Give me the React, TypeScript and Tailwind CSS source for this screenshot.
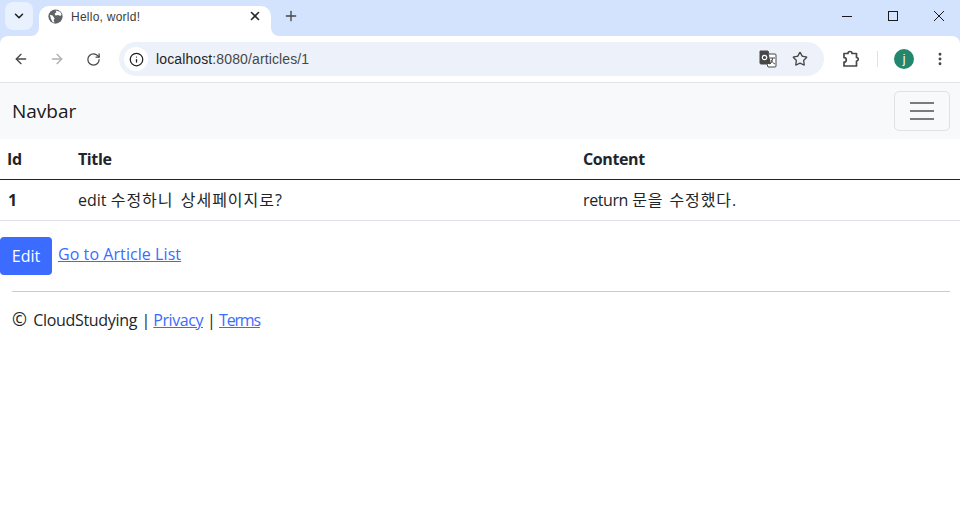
import React from 'react';
import { ArrowLeft, ArrowRight, RotateCw, Star, Plus, X, ChevronDown, EllipsisVertical, Info } from 'lucide-react';

const FONT = "font-['Open_Sans','Noto_Sans_CJK_KR',sans-serif]";

/* ── Browser chrome ── */
const TabStrip = () => (
  <div className="h-9 bg-[#d3e3fd] flex items-start pl-[4px] font-['Liberation_Sans',sans-serif]">
    <div className="w-[28px] h-[28px] mt-[2px] ml-[1px] rounded-lg bg-[#e9f0fe] flex items-center justify-center text-[#1f1f1f]">
      <ChevronDown size={14} strokeWidth={2.6} />
    </div>
    <div className="relative w-[232px] h-[30px] mt-[6px] ml-[6px] bg-white rounded-t-[10px] flex items-center pl-[9px] pr-[9px] pb-[10px]">
      {/* concave tab corners */}
      <svg width="8" height="8" viewBox="0 0 8 8" className="absolute left-[-8px] bottom-0">
        <path d="M8 0v8H0a8 8 0 0 0 8-8z" fill="#fff" />
      </svg>
      <svg width="8" height="8" viewBox="0 0 8 8" className="absolute right-[-8px] bottom-0">
        <path d="M0 0v8h8a8 8 0 0 1-8-8z" fill="#fff" />
      </svg>
      <svg width="15" height="15" viewBox="0 0 16 16">
        <circle cx="8" cy="8" r="7.6" fill="#5f6368" />
        <path d="M2 6l3 1 2 3-1 2 1 2.5L5 14 3 10zM8 1.5l1 2-2 1.5 1 2 3-.5 2 1 1.5-1.5L13 3z" fill="#fff" />
      </svg>
      <span className="ml-[8px] text-[12px] tracking-[0.25px] text-[#3c3c3c] mt-[1px]">Hello, world!</span>
      <X size={14} strokeWidth={2.8} className="ml-auto text-[#2b2b2b]" />
    </div>
    <div className="w-7 h-7 mt-[2px] ml-[6px] flex items-center justify-center text-[#444746]">
      <Plus size={16} strokeWidth={2} />
    </div>
    <div className="ml-auto flex items-center h-8 text-[#1a1a1a] mr-[-2px]">
      <div className="w-[46px] flex justify-center">
        <svg width="10" height="10" viewBox="0 0 10 10"><path d="M0 5.5h10" stroke="currentColor" /></svg>
      </div>
      <div className="w-[46px] flex justify-center">
        <svg width="10" height="10" viewBox="0 0 10 10"><rect x=".5" y=".5" width="9" height="9" fill="none" stroke="currentColor" /></svg>
      </div>
      <div className="w-[46px] flex justify-center">
        <svg width="10" height="10" viewBox="0 0 10 10"><path d="M0 0l10 10M10 0L0 10" stroke="currentColor" /></svg>
      </div>
    </div>
  </div>
);

const Toolbar = () => (
  <div className="bg-[#d3e3fd]">
    <div className="h-[47px] bg-white border-b border-[#e3e3e3] rounded-t-lg flex items-center font-['Liberation_Sans',sans-serif]">
      <div className="w-[42px] flex justify-center text-[#474747]"><ArrowLeft size={16} strokeWidth={2} /></div>
      <div className="w-[30px] flex justify-center text-[#b0b0b0]"><ArrowRight size={16} strokeWidth={2} /></div>
      <div className="w-[42px] flex justify-center text-[#474747]"><RotateCw size={15} strokeWidth={2} /></div>
      <div className="w-[705px] h-[34px] ml-[5px] rounded-full bg-[#edf2fa] flex items-center pl-[5px] pr-[16px]">
        <div className="w-6 h-6 rounded-full bg-white flex items-center justify-center text-[#1f1f1f]">
          <Info size={15} strokeWidth={2} />
        </div>
        <span className="ml-[8px] text-[14px] tracking-[0.12px] text-[#1f1f1f]">
          localhost<span className="text-[#474747]">:8080/articles/1</span>
        </span>
        <svg width="18" height="18" viewBox="0 0 18 18" className="ml-auto">
          <path d="M1 1h8l1 3h6a1 1 0 0 1 1 1v11a1 1 0 0 1-1 1H9l-1-3H2a1 1 0 0 1-1-1z" fill="#fff" stroke="#474747" />
          <path d="M1 1h8l3 13H2a1 1 0 0 1-1-1z" fill="#474747" />
          <circle cx="5.5" cy="7.5" r="2.2" fill="none" stroke="#fff" strokeWidth="1.2" />
          <path d="M11 8h5M13.5 8c0 3-1 5-3 6M12 10c1 2 2 3 4 4" stroke="#474747" fill="none" />
        </svg>
        <Star size={16} strokeWidth={2} className="ml-[15px] text-[#474747]" />
      </div>
      <div className="w-[53px] flex justify-center text-[#474747]">
        {/* extension piece */}
        <svg width="18" height="18" viewBox="0 0 18 18" fill="none" stroke="currentColor" strokeWidth="1.7" strokeLinejoin="round">
          <path d="M2 3.5h4a2 2 0 0 1 4 0h4.5v4a1.7 1.7 0 0 1 0 3.5v5H2v-3.8a2 2 0 0 0 0-4.6z" />
        </svg>
      </div>
      <div className="w-px h-4 bg-[#d3e3fd]" />
      <div className="ml-[16px] w-5 h-5 rounded-full bg-[#23876f] text-white text-[12px] flex items-center justify-center">j</div>
      <div className="ml-[18px] text-[#474747]"><EllipsisVertical size={16} strokeWidth={2.4} /></div>
    </div>
  </div>
);

/* ── Page ── */
const Navbar = () => (
  <nav className="h-14 bg-[#f8f9fa] flex items-center justify-between pl-3 pr-[10px]">
    <span className="text-[19px] text-[#1a1a1a] pt-[1px]">Navbar</span>
    <button className="w-[56px] h-10 rounded-[5px] border border-[#e0e1e2] flex flex-col items-center justify-center gap-[6px]">
      <span className="w-6 h-[2px] bg-[#7a7b7c]" />
      <span className="w-6 h-[2px] bg-[#7a7b7c]" />
      <span className="w-6 h-[2px] bg-[#7a7b7c]" />
    </button>
  </nav>
);

const ArticleTable = () => (
  <table className="w-full border-collapse text-[16px] text-[#212529] table-fixed">
    <thead>
      <tr className="h-[40px] border-b border-[#212529]">
        <th className="w-[70px] pl-[7px] pr-2 text-left font-bold tracking-[-0.4px]">Id</th>
        <th className="w-[505px] px-2 text-left font-bold tracking-[-0.4px]">Title</th>
        <th className="px-2 text-left font-bold tracking-[-0.4px]">Content</th>
      </tr>
    </thead>
    <tbody>
      <tr className="h-[41px] border-b border-[#dee2e6]">
        <th className="px-2 text-left font-bold">1</th>
        <td className="px-2">edit <span className="tracking-[1px] [word-spacing:2px]">수정하니 상세페이지로?</span></td>
        <td className="px-2"><span className="tracking-[-0.4px]">return</span> <span className="tracking-[0.9px] [word-spacing:1px]">문을 수정했다.</span></td>
      </tr>
    </tbody>
  </table>
);

export default function App() {
  return (
    <div className={`min-h-[515px] bg-white ${FONT}`}>
      <TabStrip />
      <Toolbar />
      <Navbar />
      <ArticleTable />
      <div className="flex items-start gap-[6px] mt-4">
        <button className="w-[52px] h-[38px] rounded-[4px] bg-[#3b6cff] text-white text-[16px]">Edit</button>
        <a href="#" className="text-[16px] tracking-[0.07px] leading-[34px] underline text-[#3b6cff]">Go to Article List</a>
      </div>
      <footer className="ml-3 mr-[10px] mt-4 pt-[16px] border-t border-[#cccccc] text-[16px] text-[#212529]">
        <span className="text-[18px] leading-none mr-[2px]">©</span> <span className="tracking-[-0.3px]">CloudStudying</span> | <a href="#" className="underline tracking-[-0.45px] ml-[-1px] text-[#3b6cff]">Privacy</a> | <a href="#" className="underline tracking-[-1.2px] ml-[-1px] text-[#3b6cff]">Terms</a>
      </footer>
    </div>
  );
}
